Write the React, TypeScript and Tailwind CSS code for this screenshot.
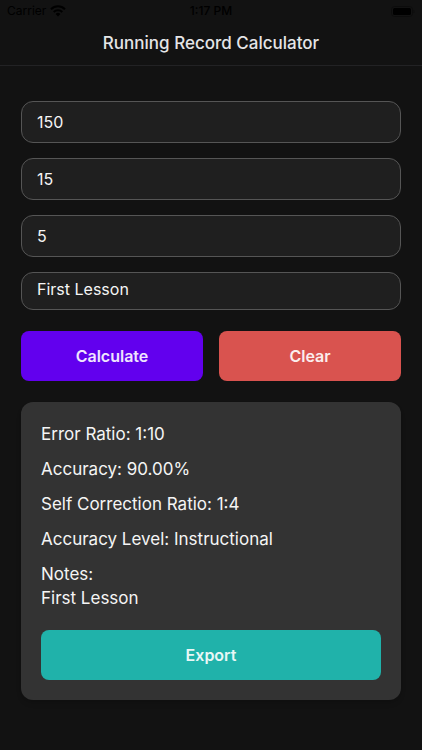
import { useState } from "react";

const inputClass =
  "block w-full rounded-xl border border-[#555555] bg-[#1f1f1f] px-[15px] text-base text-[#f5f5f5] outline-none";

const buttonClass =
  "h-[50px] rounded-lg text-base font-semibold text-white/90";

type Results = {
  errorRatio: string;
  accuracy: string;
  selfCorrection: string;
  level: string;
  notes: string;
};

function getLevel(accuracy: number) {
  if (accuracy >= 95) return "Independent";
  if (accuracy >= 90) return "Instructional";
  return "Frustration";
}

function calculate(words: number, errors: number, corrections: number, notes: string): Results {
  const accuracy = words ? ((words - errors) / words) * 100 : 0;
  return {
    errorRatio: errors ? `1:${Math.round(words / errors)}` : "0",
    accuracy: `${accuracy.toFixed(2)}%`,
    selfCorrection: corrections ? `1:${Math.round((errors + corrections) / corrections)}` : "0",
    level: getLevel(accuracy),
    notes,
  };
}

function StatusBar() {
  return (
    <div className="grid h-[22px] grid-cols-3 items-center px-[7px] text-xs text-black">
      <div className="flex items-center gap-1">
        <span>Carrier</span>
        <svg width="16" height="12" viewBox="0 0 16 12" fill="none" stroke="currentColor" strokeWidth="2">
          <path d="M1 4.2a10 10 0 0 1 14 0" />
          <path d="M3.7 7a6.2 6.2 0 0 1 8.6 0" />
          <path d="M8 11.4 5.6 9a3.5 3.5 0 0 1 4.8 0Z" fill="currentColor" stroke="none" />
        </svg>
      </div>
      <span className="text-center font-medium">1:17 PM</span>
      <svg className="justify-self-end" width="24" height="11" viewBox="0 0 24 11">
        <rect x="0.5" y="0.5" width="21" height="10" rx="3" fill="none" stroke="#0c0c0c" />
        <rect x="2" y="2" width="18" height="7" rx="1.5" fill="#000" />
        <path d="M22.5 3.7c1.4.6 1.4 3 0 3.6Z" fill="#0c0c0c" />
      </svg>
    </div>
  );
}

export default function App() {
  const [words, setWords] = useState("150");
  const [errors, setErrors] = useState("15");
  const [corrections, setCorrections] = useState("5");
  const [notes, setNotes] = useState("First Lesson");
  const [results, setResults] = useState<Results | null>(calculate(150, 15, 5, "First Lesson"));

  const fields = [
    { label: "Total words", value: words, onChange: setWords },
    { label: "Errors", value: errors, onChange: setErrors },
    { label: "Self corrections", value: corrections, onChange: setCorrections },
  ];

  const clear = () => {
    setWords("");
    setErrors("");
    setCorrections("");
    setNotes("");
    setResults(null);
  };

  return (
    <div className="min-h-screen bg-[#121212] font-['Inter',sans-serif] text-[#f5f5f5]">
      {/* Header */}
      <header className="border-b border-[#222224]">
        <StatusBar />
        <h1 className="flex h-[43px] items-center justify-center text-[17px] font-medium text-[#e5e5e7]">
          Running Record Calculator
        </h1>
      </header>

      <main className="px-[21px] pt-[35px] pb-10">
        {/* Inputs */}
        <div className="flex flex-col gap-[15px]">
          {fields.map((field) => (
            <input
              key={field.label}
              aria-label={field.label}
              inputMode="numeric"
              value={field.value}
              onChange={(e) => field.onChange(e.target.value)}
              className={`${inputClass} h-[42px]`}
            />
          ))}
          <textarea
            aria-label="Notes"
            rows={1}
            value={notes}
            onChange={(e) => setNotes(e.target.value)}
            className={`${inputClass} h-[38px] resize-none overflow-hidden pt-1`}
          />
        </div>

        {/* Actions */}
        <div className="mt-[21px] grid grid-cols-2 gap-4">
          <button
            type="button"
            onClick={() => setResults(calculate(Number(words), Number(errors), Number(corrections), notes))}
            className={`${buttonClass} bg-[#6200ee]`}
          >
            Calculate
          </button>
          <button type="button" onClick={clear} className={`${buttonClass} bg-[#d9534f]`}>
            Clear
          </button>
        </div>

        {/* Results */}
        {results && (
          <section className="mt-[21px] rounded-xl bg-[#333333] p-5 shadow-md">
            <div className="flex flex-col gap-[11px] text-[17px] leading-6">
              <p>Error Ratio: {results.errorRatio}</p>
              <p>Accuracy: {results.accuracy}</p>
              <p>Self Correction Ratio: {results.selfCorrection}</p>
              <p>Accuracy Level: {results.level}</p>
              <p>
                Notes:
                <br />
                {results.notes}
              </p>
            </div>
            <button type="button" className={`${buttonClass} mt-5 w-full bg-[#20b2aa]`}>
              Export
            </button>
          </section>
        )}
      </main>
    </div>
  );
}
